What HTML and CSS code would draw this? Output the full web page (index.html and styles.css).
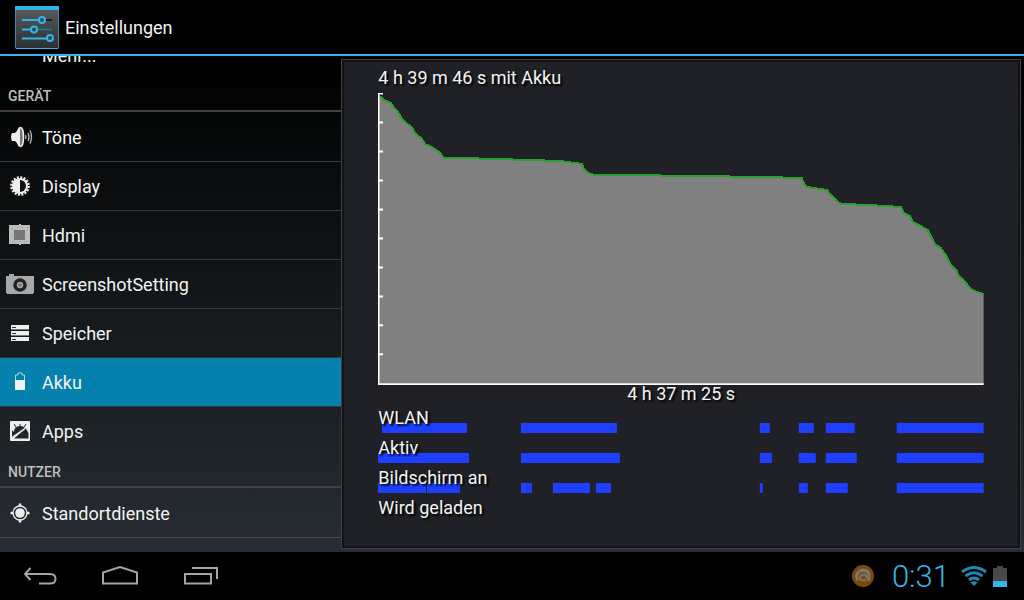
FILE: index.html
```html
<!DOCTYPE html>
<html lang="de">
<head>
    <meta charset="UTF-8">
    <meta name="viewport" content="width=device-width, initial-scale=1.0">
    <title>Einstellungen</title>
    <link rel="stylesheet" href="styles.css">
</head>
<body>

    <!-- Titelleiste -->
    <header class="titlebar">
        <svg class="app-icon" width="44" height="44" viewBox="0 0 44 44">
            <defs>
                <linearGradient id="tile" x1="0" y1="0" x2="0" y2="1">
                    <stop offset="0" stop-color="#5a5c5e"/>
                    <stop offset="1" stop-color="#2c2f33"/>
                </linearGradient>
            </defs>
            <rect x="0.5" y="0.5" width="43" height="42" rx="1" fill="url(#tile)" stroke="#2b8fb8"/>
            <rect width="44" height="4" rx="1" fill="#33b5e5"/>
            <path d="M1 42.5H43" stroke="#33b5e5"/>
            <path d="M30 14H37" stroke="#1c1e20" stroke-width="2"/>
            <path d="M22 23.500H37" stroke="#2478a0" stroke-width="1.500"/>
            <path d="M7 14H24M7 23.500H16M7 32.500H32" stroke="#33b5e5" stroke-width="2" fill="none"/>
            <g fill="#23445a" stroke="#33b5e5" stroke-width="2">
                <circle cx="27" cy="14" r="3"/>
                <circle cx="19" cy="23.500" r="3"/>
                <circle cx="35" cy="32" r="3"/>
            </g>
        </svg>
        <h1>Einstellungen</h1>
    </header>

    <main class="content">
        <!-- Liste der Einstellungen, etwas nach unten gescrollt -->
        <nav class="sidebar">
            <div class="scroller">
                <ul class="list">
                    <li><a href="#mehr"><span class="icon"></span>Mehr...</a></li>
                </ul>

                <h2>GERÄT</h2>
                <ul class="list">
                    <li><a href="#toene">
                        <svg class="icon" viewBox="0 0 28 28">
                            <ellipse cx="14.500" cy="14" rx="3.500" ry="10" fill="#777"/>
                            <path d="M6 10H9L14 4.500V23.500L9 18H6Q4 14 6 10Z" fill="#eee"/>
                            <ellipse cx="14.500" cy="14" rx="3" ry="9.500" fill="none" stroke="#eee" stroke-width="1.500"/>
                            <path d="M19.500 12Q20.500 14 19.500 16M22 10Q24 14 22 18M24 7.500Q27 14 24 20.500" fill="none" stroke="#bbb" stroke-width="1.300"/>
                        </svg>Töne</a></li>
                    <li><a href="#display">
                        <svg class="icon" viewBox="0 0 28 28">
                            <circle cx="14" cy="14" r="8" fill="#eee"/>
                            <circle cx="14" cy="14" r="8.600" fill="none" stroke="#eee" stroke-width="2.500" stroke-dasharray="2 1.377"/>
                            <path d="M14 8A6 6 0 0 1 14 20Z" fill="#101314"/>
                        </svg>Display</a></li>
                    <li><a href="#hdmi">
                        <svg class="icon" viewBox="0 0 28 28">
                            <path d="M3 4H13V3H15V4H24V23H15V24H13V23H3Z" fill="#bdbdbd"/>
                            <rect x="8" y="9" width="11" height="10" fill="#777"/>
                            <path d="M6 6.500H22M8 20.500H22" stroke="#999" stroke-dasharray="1 4"/>
                            <path d="M6.500 8V21M21.500 8V21" stroke="#999" stroke-dasharray="1 5"/>
                        </svg>Hdmi</a></li>
                    <li><a href="#screenshot">
                        <svg class="icon" viewBox="0 0 28 28">
                            <path d="M0 6H3V4H8V6H28V23H27V24H1V23H0Z" fill="#a8a8a8"/>
                            <circle cx="14" cy="15" r="5" fill="#a0a0a0" stroke="#202225" stroke-width="3.500"/>
                            <circle cx="14" cy="15" r="1.500" fill="#777"/>
                        </svg>ScreenshotSetting</a></li>
                    <li><a href="#speicher">
                        <svg class="icon" viewBox="0 0 28 28">
                            <path d="M5 6H23V10H5ZM5 12H23V16H5ZM5 18H23V22H5Z" fill="#eee"/>
                            <path d="M5 10.500H23M5 16.500H23" stroke="#777"/>
                            <path d="M6 8.500H10M6 14.500H10M6 20.500H10" stroke="#333"/>
                        </svg>Speicher</a></li>
                    <li><a href="#akku" class="active" aria-current="page">
                        <svg class="icon" viewBox="0 0 28 28">
                            <path d="M9.500 12V7H12V5H16V7H18.500V12" fill="#0681ad" stroke="#a5d6e8"/>
                            <rect x="9" y="12" width="10" height="10" fill="#f2f2f2"/>
                        </svg>Akku</a></li>
                    <li><a href="#apps">
                        <svg class="icon" viewBox="0 0 28 28">
                            <rect x="4" y="4" width="20" height="20" rx="1" fill="#eee"/>
                            <path d="M8 7L10 10M14 10V7M20 7L18 10" stroke="#222629" fill="none"/>
                            <path d="M6 13L8 15Q8 9 14 9Q18 9 19.500 12L12 16L6 21Z" fill="#222629"/>
                            <path d="M8 21.500L15 15.500L20 11.500L22.500 16V21.500Z" fill="#222629"/>
                            <path d="M6 20.500L19 11.500" stroke="#eee" stroke-width="1.500"/>
                        </svg>Apps</a></li>
                </ul>

                <h2>NUTZER</h2>
                <ul class="list">
                    <li><a href="#standort">
                        <svg class="icon" viewBox="0 0 28 28">
                            <circle cx="14" cy="14" r="4.800" fill="#eee"/>
                            <circle cx="14" cy="14" r="7" fill="none" stroke="#eee" stroke-width="1.300"/>
                            <path d="M14 4.500V7.500M14 20.500V23.500M4.500 14H7.500M20.500 14H23.500" stroke="#eee" stroke-width="2.500"/>
                        </svg>Standortdienste</a></li>
                </ul>
            </div>
        </nav>

        <!-- Akkuverlauf -->
        <section class="panel">
            <h3>4 h 39 m 46 s mit Akku</h3>

            <svg class="chart" viewBox="0 0 606 292">
                <path class="area" d="M1 3L6 7L13 10L16 15L20 19L24 26L35 36L37 40L44 46L47 51L54 54L61 59L66 65L80 65L118 66L182 68L204 71L206 76L210 80L217 82L244 82L313 83L382 84L424 85L427 92L429 94L449 97L455 104L463 111L489 112L523 114L526 120L532 123L535 129L550 137L554 145L558 152L563 155L568 162L573 172L579 178L581 183L585 186L593 196L599 199L606 201V291H1Z"/>
                <path class="level" d="M2 3L6 7L13 10L16 15L20 19L24 26L35 36L37 40L44 46L47 51L54 54L61 59L66 65L80 65L118 66L182 68L204 71L206 76L210 80L217 82L244 82L313 83L382 84L424 85L427 92L429 94L449 97L455 104L463 111L489 112L523 114L526 120L532 123L535 129L550 137L554 145L558 152L563 155L568 162L573 172L579 178L581 183L585 186L593 196L599 199L606 201"/>
                <path class="axis" d="M0.500 0V291.500H606M0 0.500H5M0 29.500H5M0 58.500H5M0 87.500H5M0 116.500H5M0 145.500H5M0 174.500H5M0 203.500H5M0 232.500H5M0 261.500H5"/>
            </svg>
            <p class="duration">4 h 37 m 25 s</p>

            <!-- Zeitleisten, gleiche Breite wie das Diagramm -->
            <div class="timeline">
                <span>WLAN</span>
                <svg viewBox="0 0 606 10" preserveAspectRatio="none">
                    <path d="M4 0H89V10H4ZM143 0H239V10H143ZM382 0H392V10H382ZM421 0H436V10H421ZM448 0H477V10H448ZM519 0H606V10H519Z"/>
                </svg>
            </div>
            <div class="timeline">
                <span>Aktiv</span>
                <svg viewBox="0 0 606 10" preserveAspectRatio="none">
                    <path d="M0 0H91V10H0ZM143 0H242V10H143ZM382 0H394V10H382ZM421 0H438V10H421ZM448 0H479V10H448ZM519 0H606V10H519Z"/>
                </svg>
            </div>
            <div class="timeline">
                <span>Bildschirm an</span>
                <svg viewBox="0 0 606 10" preserveAspectRatio="none">
                    <path d="M0 0H48V10H0ZM49 0H82V10H49ZM143 0H154V10H143ZM175 0H212V10H175ZM218 0H233V10H218ZM382 0H385V10H382ZM421 0H430V10H421ZM448 0H470V10H448ZM519 0H606V10H519Z"/>
                </svg>
            </div>
            <div class="timeline">
                <span>Wird geladen</span>
            </div>
        </section>
    </main>

    <!-- Systemleiste -->
    <footer class="systembar">
        <div class="keys">
            <button type="button" aria-label="Zurück">
                <svg width="40" height="28" viewBox="0 0 40 28">
                    <path d="M10.500 6L5 12L10.500 18M5 12H30Q35.500 12 35.500 17Q35.500 21.500 30 21.500H19"/>
                </svg>
            </button>
            <button type="button" aria-label="Startseite">
                <svg width="40" height="28" viewBox="0 0 40 28">
                    <path d="M3 21.500V10.500L20 5L37 10.500V21.500Z"/>
                </svg>
            </button>
            <button type="button" aria-label="Letzte Apps">
                <svg width="40" height="28" viewBox="0 0 40 28">
                    <path d="M5 12H31V21.500H5ZM12 6H37V17"/>
                </svg>
            </button>
        </div>
        <div class="status">
            <svg width="22" height="22" viewBox="0 0 22 22">
                <circle cx="11" cy="11" r="11" fill="#7a4a06"/>
                <path d="M5.500 15.500Q3 9 8 6Q13 3.500 16.500 8Q17.500 10 16.500 16" fill="none" stroke="#777" stroke-width="3"/>
                <path d="M14 15Q8 16.500 8 12.500Q8.500 9.500 12 9.500Q15 10 14.500 13" fill="none" stroke="#777" stroke-width="2"/>
            </svg>
            <time class="clock">0:31</time>
            <svg width="26" height="20" viewBox="0 0 26 20">
                <g fill="none" stroke="#1f88b0" stroke-width="3">
                    <path d="M1 6Q13 -3 25 6"/>
                    <path d="M4.500 10Q13 3.500 21.500 10"/>
                    <path d="M8 14Q13 10 18 14"/>
                </g>
                <path d="M13 20L9.500 16.500Q13 14 16.500 16.500Z" fill="#1f88b0"/>
            </svg>
            <svg width="14" height="21" viewBox="0 0 14 21">
                <path d="M0 2H4V0H10V2H14V21H0Z" fill="#484848"/>
                <rect y="15" width="14" height="6" fill="#33b5e5"/>
            </svg>
        </div>
    </footer>

</body>
</html>
```

FILE: styles.css
```css
* {
    box-sizing: border-box;
}

body {
    margin: 0;
    height: 100vh;
    display: flex;
    flex-direction: column;
    overflow: hidden;
    background-color: #000;
    color: #f3f3f3;
    font-family: Roboto, sans-serif;
    font-size: 18px;
}

h1, h2, h3, p, ul {
    margin: 0;
    padding: 0;
    font-weight: 400;
}

/* Titelleiste */
.titlebar {
    display: flex;
    align-items: center;
    gap: 6px;
    height: 56px;
    padding: 2px 0 0 15px;
    border-bottom: 2px solid #33b5e5;
}

.titlebar h1 {
    font-size: 18px;
    line-height: 24px;
}

.app-icon {
    display: block;
}

.content {
    flex: 1;
    min-height: 0;
    display: grid;
    grid-template-columns: 1fr 2fr;
    background: linear-gradient(#000, #14181a 50%, #272d33);
}

/* Linke Liste */
.sidebar {
    min-height: 0;
    overflow: hidden;
}

.scroller {
    margin-top: -25px;
}

.sidebar h2 {
    height: 32px;
    padding: 4px 8px 0;
    border-bottom: 2px solid #3f4143;
    color: #bebebe;
    font-size: 14px;
    font-weight: 500;
    line-height: 24px;
}

.sidebar h2 + .list {
    padding-top: 1px;
}

.list {
    list-style: none;
}

.list a {
    display: flex;
    align-items: center;
    gap: 8px;
    height: 49px;
    padding-left: 6px;
    border-bottom: 1px solid #36393b;
    color: #f3f3f3;
    text-decoration: none;
}

.list li:last-child a {
    border-bottom-color: transparent;
}

.list:last-child li:last-child a {
    border-bottom-color: #45494d;
}

.list .active {
    background-color: #0681ad;
}

.icon {
    flex: none;
    width: 28px;
    height: 28px;
}

/* Akku-Bereich */
.panel {
    margin: 3px 3px 3px 0;
    padding: 6px 36px 0;
    border: 1px solid #3c3e41;
    box-shadow: inset 0 0 0 2px #121316;
    background-color: #202126;
    text-shadow: 2px 2px 2px #000;
}

.panel h3 {
    font-size: 18px;
    line-height: 24px;
    margin-bottom: 3px;
}

.chart {
    display: block;
    width: 100%;
}

.area {
    fill: #808080;
}

.level {
    fill: none;
    stroke: #2ca02c;
    stroke-width: 2;
    shape-rendering: crispEdges;
}

.axis {
    fill: none;
    stroke: #fff;
    stroke-width: 2;
}

.duration {
    text-align: center;
    line-height: 18px;
}

/* Beschriftung liegt über den Balken */
.timeline {
    display: grid;
    height: 30px;
}

.timeline > * {
    grid-area: 1 / 1;
}

.timeline span {
    z-index: 1;
    line-height: 30px;
}

.timeline svg {
    align-self: end;
    width: 100%;
    height: 10px;
    fill: #1f3fff;
}

/* Systemleiste */
.systembar {
    display: flex;
    justify-content: space-between;
    align-items: center;
    height: 48px;
    padding: 0 17px 0 20px;
    background-color: #000;
}

.keys {
    display: flex;
    gap: 40px;
}

.keys button {
    display: block;
    padding: 0;
    border: 0;
    background: none;
    cursor: pointer;
}

.keys svg {
    display: block;
    fill: none;
    stroke: #a4a4a4;
    stroke-width: 2;
}

.status {
    display: flex;
    align-items: center;
    gap: 6px;
}

.clock {
    margin: 0 5px 0 12px;
    padding-top: 2px;
    color: #33b5e5;
    font-size: 31px;
    font-weight: 300;
    line-height: 46px;
}
```
